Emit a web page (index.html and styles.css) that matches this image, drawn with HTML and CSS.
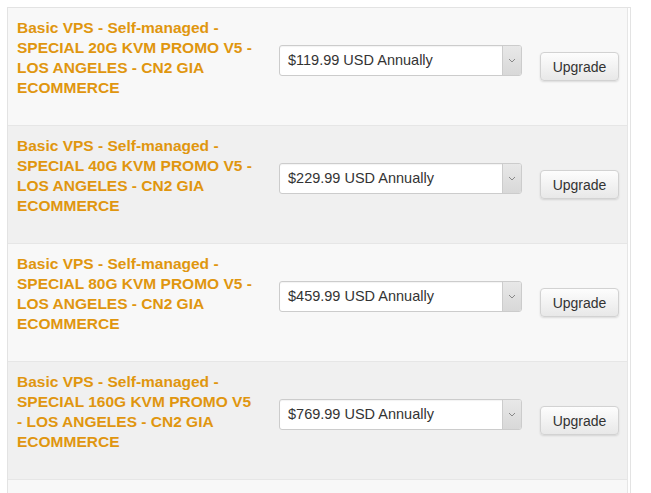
FILE: index.html
```html
<!DOCTYPE html>
<html lang="en">
<head>
    <meta charset="UTF-8">
    <title>Upgrade</title>
    <link rel="stylesheet" href="styles.css">
</head>
<body>
    <div class="upgrade-table">
        <div class="row">
            <div class="product">Basic VPS - Self-managed - SPECIAL 20G KVM PROMO V5 - LOS ANGELES - CN2 GIA ECOMMERCE</div>
            <div class="cycle">
                <span class="value">$119.99 USD Annually</span>
                <span class="arrow"><svg width="8" height="5" viewBox="0 0 8 5"><path d="M1 1l3 3 3-3" fill="none" stroke="#888" stroke-width="1"/></svg></span>
            </div>
            <button type="button" class="btn">Upgrade</button>
        </div>
        <div class="row">
            <div class="product">Basic VPS - Self-managed - SPECIAL 40G KVM PROMO V5 - LOS ANGELES - CN2 GIA ECOMMERCE</div>
            <div class="cycle">
                <span class="value">$229.99 USD Annually</span>
                <span class="arrow"><svg width="8" height="5" viewBox="0 0 8 5"><path d="M1 1l3 3 3-3" fill="none" stroke="#888" stroke-width="1"/></svg></span>
            </div>
            <button type="button" class="btn">Upgrade</button>
        </div>
        <div class="row">
            <div class="product">Basic VPS - Self-managed - SPECIAL 80G KVM PROMO V5 - LOS ANGELES - CN2 GIA ECOMMERCE</div>
            <div class="cycle">
                <span class="value">$459.99 USD Annually</span>
                <span class="arrow"><svg width="8" height="5" viewBox="0 0 8 5"><path d="M1 1l3 3 3-3" fill="none" stroke="#888" stroke-width="1"/></svg></span>
            </div>
            <button type="button" class="btn">Upgrade</button>
        </div>
        <div class="row">
            <div class="product">Basic VPS - Self-managed - SPECIAL 160G KVM PROMO V5 - LOS ANGELES - CN2 GIA ECOMMERCE</div>
            <div class="cycle">
                <span class="value">$769.99 USD Annually</span>
                <span class="arrow"><svg width="8" height="5" viewBox="0 0 8 5"><path d="M1 1l3 3 3-3" fill="none" stroke="#888" stroke-width="1"/></svg></span>
            </div>
            <button type="button" class="btn">Upgrade</button>
        </div>
        <div class="row"></div>
    </div>
</body>
</html>
```

FILE: styles.css
```css
body {
    margin: 0;
    font-family: "Liberation Sans", Arial, sans-serif;
    background: #fff;
}
.upgrade-table {
    margin: 7px 0 0 7px;
    width: 620px;
    border: 1px solid #e3e3e3;
    border-bottom: none;
    padding-right: 2px;
}
.row {
    display: flex;
    align-items: center;
    height: 117px;
    padding: 0 8px 0 9px;
    background: #f8f8f8;
    border-top: 1px solid #e6e6e6;
    border-right: 1px solid #e6e6e6;
}
.row:first-child {
    border-top: none;
}
.row:nth-child(even) {
    background: #f0f0f0;
}
.product {
    width: 240px;
    margin-right: 22px;
    align-self: flex-start;
    padding-top: 10px;
    font-size: 15.5px;
    line-height: 20px;
    font-weight: bold;
    color: #e0960f;
}
.cycle {
    display: flex;
    width: 241px;
    height: 29px;
    margin-bottom: 12px;
    border: 1px solid #ccc;
    border-radius: 3px;
    background: #fff;
    box-shadow: inset 0 1px 1px rgba(0, 0, 0, 0.05);
}
.cycle .value {
    flex: 1;
    padding-left: 8px;
    font-size: 14.5px;
    line-height: 29px;
    color: #333;
}
.cycle .arrow {
    width: 18px;
    display: flex;
    align-items: center;
    justify-content: center;
    border-left: 1px solid #ccc;
    border-radius: 0 2px 2px 0;
    background: linear-gradient(#e8e8e8, #d8d8d8);
}
.btn {
    margin-left: 18px;
    width: 79px;
    height: 29px;
    padding: 0;
    border: 1px solid #d2d2d2;
    border-radius: 4px;
    background: linear-gradient(#fdfdfd, #e8e8e8);
    box-shadow: 0 1px 2px rgba(0, 0, 0, 0.12);
    font-family: "Liberation Sans", Arial, sans-serif;
    font-size: 14px;
    color: #333;
    cursor: pointer;
}
```
